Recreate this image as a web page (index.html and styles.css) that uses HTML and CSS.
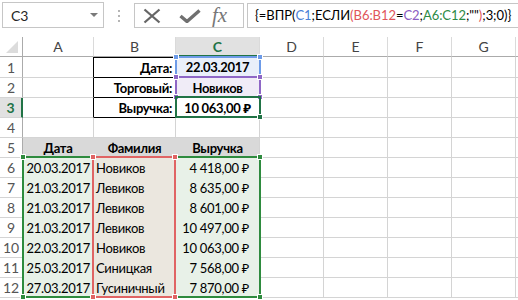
FILE: index.html
```html
<!DOCTYPE html>
<html lang="ru">
<head>
    <meta charset="UTF-8">
    <title>ВПР с ЕСЛИ</title>
    <link rel="stylesheet" href="styles.css">
</head>
<body>
    <div class="toolbar">
        <div class="name-box"><span>C3</span><span class="caret"></span></div>
        <div class="grip"><i></i><i></i><i></i></div>
        <div class="fx-buttons">
            <svg class="icon-x" width="18" height="16" viewBox="0 0 18 16"><path d="M1.5 1.5 L16.5 14.5 M16.5 1.5 L1.5 14.5" stroke="#666" stroke-width="2.3" fill="none"/></svg>
            <svg class="icon-check" width="22" height="14" viewBox="0 0 22 14"><path d="M1.5 7 L8 12.5 L20.5 1.5" stroke="#707070" stroke-width="3.4" fill="none"/></svg>
            <span class="fx">fx</span>
        </div>
        <div class="formula">{=ВПР(<span class="t-blue">C1</span>;ЕСЛИ<span class="t-red">(</span><span class="t-red">B6:B12</span>=<span class="t-purple">C2</span>;<span class="t-green">A6:C12</span>;""<span class="t-red">)</span>;3;0)}</div>
    </div>

    <div class="sheet">
        <!-- заголовки столбцов -->
        <div class="cell corner"><span class="tri"></span></div>
        <div class="cell ch">A</div>
        <div class="cell ch">B</div>
        <div class="cell ch sel-col">C</div>
        <div class="cell ch">D</div>
        <div class="cell ch">E</div>
        <div class="cell ch">F</div>
        <div class="cell ch">G</div>
        <div class="cell ch"></div>

        <!-- 1 -->
        <div class="cell rh">1</div>
        <div class="cell edge-black"></div>
        <div class="cell box-black top-black r b">Дата:</div>
        <div class="cell f-blue ctr b">22.03.2017</div>
        <div class="cell"></div><div class="cell"></div><div class="cell"></div><div class="cell"></div><div class="cell"></div>

        <!-- 2 -->
        <div class="cell rh">2</div>
        <div class="cell edge-black"></div>
        <div class="cell box-black r b">Торговый:</div>
        <div class="cell f-purple ctr b">Новиков</div>
        <div class="cell"></div><div class="cell"></div><div class="cell"></div><div class="cell"></div><div class="cell"></div>

        <!-- 3 -->
        <div class="cell rh sel-row">3</div>
        <div class="cell edge-black"></div>
        <div class="cell box-black r b">Выручка:</div>
        <div class="cell ctr b">10&nbsp;063,00&nbsp;₽</div>
        <div class="cell"></div><div class="cell"></div><div class="cell"></div><div class="cell"></div><div class="cell"></div>

        <!-- 4 -->
        <div class="cell rh">4</div>
        <div class="cell"></div><div class="cell"></div><div class="cell"></div>
        <div class="cell"></div><div class="cell"></div><div class="cell"></div><div class="cell"></div><div class="cell"></div>

        <!-- 5 -->
        <div class="cell rh">5</div>
        <div class="cell f-gray ctr b">Дата</div>
        <div class="cell f-gray ctr b">Фамилия</div>
        <div class="cell f-gray-end ctr b">Выручка</div>
        <div class="cell"></div><div class="cell"></div><div class="cell"></div><div class="cell"></div><div class="cell"></div>

        <!-- 6 -->
        <div class="cell rh">6</div>
        <div class="cell f-green r">20.03.2017</div>
        <div class="cell f-mix">Новиков</div>
        <div class="cell f-green r money">4&nbsp;418,00&nbsp;₽</div>
        <div class="cell"></div><div class="cell"></div><div class="cell"></div><div class="cell"></div><div class="cell"></div>

        <!-- 7 -->
        <div class="cell rh">7</div>
        <div class="cell f-green r">21.03.2017</div>
        <div class="cell f-mix">Левиков</div>
        <div class="cell f-green r money">8&nbsp;635,00&nbsp;₽</div>
        <div class="cell"></div><div class="cell"></div><div class="cell"></div><div class="cell"></div><div class="cell"></div>

        <!-- 8 -->
        <div class="cell rh">8</div>
        <div class="cell f-green r">21.03.2017</div>
        <div class="cell f-mix">Левиков</div>
        <div class="cell f-green r money">8&nbsp;601,00&nbsp;₽</div>
        <div class="cell"></div><div class="cell"></div><div class="cell"></div><div class="cell"></div><div class="cell"></div>

        <!-- 9 -->
        <div class="cell rh">9</div>
        <div class="cell f-green r">21.03.2017</div>
        <div class="cell f-mix">Левиков</div>
        <div class="cell f-green r money">10&nbsp;497,00&nbsp;₽</div>
        <div class="cell"></div><div class="cell"></div><div class="cell"></div><div class="cell"></div><div class="cell"></div>

        <!-- 10 -->
        <div class="cell rh">10</div>
        <div class="cell f-green r">22.03.2017</div>
        <div class="cell f-mix">Новиков</div>
        <div class="cell f-green r money">10&nbsp;063,00&nbsp;₽</div>
        <div class="cell"></div><div class="cell"></div><div class="cell"></div><div class="cell"></div><div class="cell"></div>

        <!-- 11 -->
        <div class="cell rh">11</div>
        <div class="cell f-green r">25.03.2017</div>
        <div class="cell f-mix">Синицкая</div>
        <div class="cell f-green r money">7&nbsp;568,00&nbsp;₽</div>
        <div class="cell"></div><div class="cell"></div><div class="cell"></div><div class="cell"></div><div class="cell"></div>

        <!-- 12 -->
        <div class="cell rh">12</div>
        <div class="cell f-green r">27.03.2017</div>
        <div class="cell f-mix">Гусиничный</div>
        <div class="cell f-green r money">7&nbsp;870,00&nbsp;₽</div>
        <div class="cell"></div><div class="cell"></div><div class="cell"></div><div class="cell"></div><div class="cell"></div>

        <!-- подсветка ссылок формулы -->
        <div class="range rg-blue"><i class="h tl"></i><i class="h tr"></i><i class="h bl"></i><i class="h br"></i></div>
        <div class="range rg-purple"><i class="h tl"></i><i class="h tr"></i><i class="h bl"></i><i class="h br"></i></div>
        <div class="range rg-active"><i class="h br"></i></div>
        <div class="range rg-green"><i class="h tl"></i><i class="h tr"></i><i class="h bl"></i><i class="h br"></i></div>
        <div class="range rg-red"><i class="h tl"></i><i class="h tr"></i><i class="h bl"></i><i class="h br"></i></div>
    </div>
</body>
</html>
```

FILE: styles.css
```css
* {
    margin: 0;
    padding: 0;
    box-sizing: border-box;
}
body {
    font-family: Lato, 'Noto Sans', sans-serif;
    background-color: #fff;
    color: #000;
    width: 518px;
    height: 300px;
    overflow: hidden;
}

/* строка формул */
.toolbar {
    display: flex;
    align-items: flex-start;
    height: 37px;
    padding: 2px 0 0 2px;
}
.name-box {
    display: flex;
    align-items: center;
    justify-content: space-between;
    width: 102px;
    height: 26px;
    border: 1px solid #c6c6c6;
    padding: 0 5px 0 8px;
    font-size: 14px;
    color: #262626;
}
.caret {
    border-left: 4px solid transparent;
    border-right: 4px solid transparent;
    border-top: 4px solid #7a7a7a;
}
.grip {
    display: flex;
    flex-direction: column;
    gap: 3px;
    margin: 8px 0 0 14px;
}
.grip i {
    width: 2px;
    height: 2px;
    background-color: #b5b5b5;
}
.fx-buttons {
    display: flex;
    align-items: center;
    width: 110px;
    height: 25px;
    margin: 1px 0 0 14px;
    padding-left: 8px;
    border: 1px solid #c6c6c6;
}
.icon-check {
    margin-left: 18px;
}
.fx {
    margin-left: 11px;
    font-family: 'Liberation Serif', serif;
    font-style: italic;
    font-size: 21px;
    color: #777;
    line-height: 1;
}
.formula {
    flex: 1;
    height: 25px;
    margin: 1px 0 0 3px;
    padding-left: 7px;
    border: 1px solid #c6c6c6;
    border-right: none;
    font-size: 13px;
    letter-spacing: -0.05px;
    line-height: 23px;
    white-space: nowrap;
    overflow: hidden;
}
.t-blue { color: #4a7fd6; }
.t-red { color: #e0555a; }
.t-purple { color: #8a5cc2; }
.t-green { color: #2c8a45; }

/* лист */
.sheet {
    position: relative;
    display: grid;
    grid-template-columns: 23px 71px 82px 84px 64px 64px 64px 64px 1fr;
    grid-template-rows: 20px 21px repeat(11, 20px);
    font-size: 13px;
    letter-spacing: -0.3px;
}
.cell {
    display: flex;
    align-items: center;
    padding: 0 3px;
    border-right: 1px solid #d4d4d4;
    border-bottom: 1px solid #d4d4d4;
    white-space: nowrap;
    overflow: hidden;
}
.corner {
    position: relative;
    border-right-color: #ababab;
    border-bottom-color: #ababab;
}
.tri {
    position: absolute;
    right: 4px;
    bottom: 3px;
    width: 12px;
    height: 12px;
    background-color: #dcdcdc;
    clip-path: polygon(100% 0, 100% 100%, 0 100%);
}
.ch {
    justify-content: center;
    color: #444;
    font-size: 14px;
    letter-spacing: 0;
    border-bottom-color: #ababab;
    border-right-color: #dadada;
}
.rh {
    justify-content: center;
    color: #555;
    font-size: 14px;
    letter-spacing: 0;
    padding: 0;
    border-right-color: #ababab;
}
.sel-col {
    background-color: #e1e1e1;
    border-bottom: 2px solid #217346;
    color: #217346;
    font-weight: 700;
}
.sel-row {
    background-color: #e1e1e1;
    border-right: 2px solid #217346;
    color: #217346;
    font-weight: 700;
}

.r { justify-content: flex-end; }
.ctr { justify-content: center; }
.b { font-weight: 700; }
.money { padding-right: 10px; }

.edge-black { border-right-color: #000; }
.box-black {
    border-right-color: #000;
    border-bottom-color: #000;
}
.top-black { border-top: 1px solid #000; }

.f-blue { background-color: #e9effa; }
.f-purple { background-color: #f0ecf7; }
.f-gray {
    background-color: #d9d9d9;
    border-color: #d9d9d9;
}
.f-gray-end {
    background-color: #d9d9d9;
    border-bottom-color: #d9d9d9;
}
.f-green {
    background-color: #e8f1e8;
    border-color: #e8f1e8;
}
.f-mix {
    background-color: #ebe7df;
    border-color: #ebe7df;
    padding-left: 2px;
}

/* рамки ссылок */
.range {
    position: absolute;
    border: 2px solid;
}
.rg-blue {
    left: 175px;
    top: 19px;
    width: 86px;
    height: 22px;
    border-color: #6d9be8;
}
.rg-purple {
    left: 175px;
    top: 39px;
    width: 86px;
    height: 22px;
    border-color: #8e67c6;
}
.rg-active {
    left: 175px;
    top: 59px;
    width: 86px;
    height: 22px;
    border-color: #217346;
}
.rg-green {
    left: 22px;
    top: 119px;
    width: 239px;
    height: 142px;
    border-color: #2e8b3e;
}
.rg-red {
    left: 92px;
    top: 119px;
    width: 84px;
    height: 142px;
    border-color: #e06464;
}
.h {
    position: absolute;
    width: 6px;
    height: 6px;
    background-color: currentColor;
    border: 1px solid #fff;
}
.rg-blue .h { color: #6d9be8; }
.rg-purple .h { color: #8e67c6; }
.rg-active .h { color: #217346; }
.rg-green .h { color: #2e8b3e; }
.rg-red .h { color: #e06464; }
.tl { left: -4px; top: -4px; }
.tr { right: -4px; top: -4px; }
.bl { left: -4px; bottom: -4px; }
.br { right: -4px; bottom: -4px; }
```
